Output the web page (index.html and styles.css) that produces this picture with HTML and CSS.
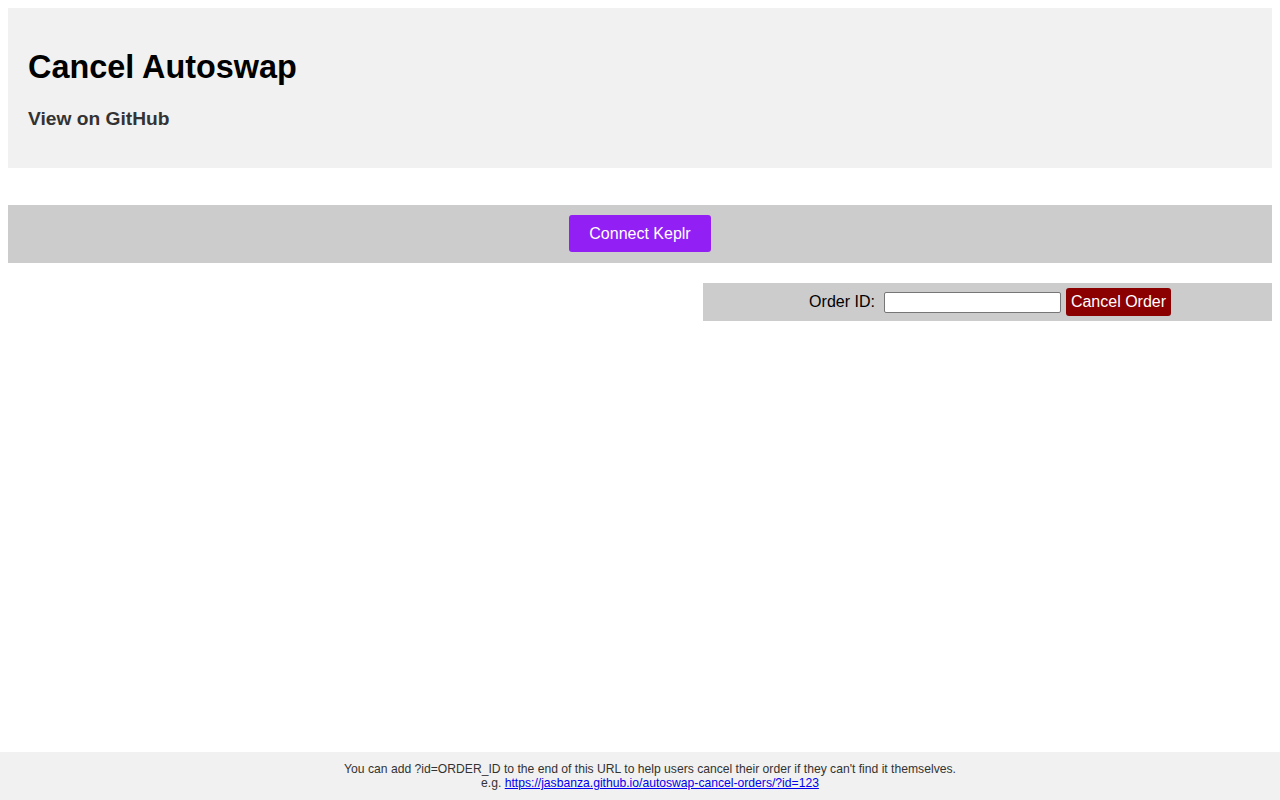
FILE: index.html
```html
<!DOCTYPE html>
<html>
<head>
<meta charset="utf-8">
<title>Cancel Autoswap</title>
<link rel="stylesheet" href="styles.css">
</head>
<body>
<header class="header">
  <h1 class="title">Cancel Autoswap</h1>
  <h3 class="subtitle"><a class="gh-link" href="#">View on GitHub</a></h3>
</header>
<div class="connect-bar">
  <button class="btn-connect">Connect Keplr</button>
</div>
<div class="main">
  <div class="orders"></div>
  <div class="cancel-panel">
    <label class="order-label" for="oid">Order ID:</label>
    <input class="order-input" id="oid" type="text">
    <button class="btn-cancel">Cancel Order</button>
  </div>
</div>
<footer class="footer">
  You can add ?id=ORDER_ID to the end of this URL to help users cancel their order if they can't find it themselves.<br>
  e.g. <a class="footer-link" href="#">https://jasbanza.github.io/autoswap-cancel-orders/?id=123</a>
</footer>
</body>
</html>
```
FILE: styles.css
```css
html, body {
  margin: 0;
  padding: 0;
}
body {
  margin: 8px;
  font-family: "Liberation Sans", Arial, sans-serif;
  color: #000;
}
.header {
  background: #f1f1f1;
  height: 160px;
  box-sizing: border-box;
  padding: 20px 20px;
  overflow: hidden;
}
.title {
  font-size: 32.4px;
  font-weight: bold;
  margin: 21px 0 22px;
}
.subtitle {
  font-size: 19.2px;
  font-weight: bold;
  margin: 0;
}
.gh-link {
  color: #333;
  text-decoration: none;
}
.connect-bar {
  margin-top: 37px;
  background: #ccc;
  padding: 10px;
  text-align: center;
  height: 58px;
  box-sizing: border-box;
}
.btn-connect {
  background: #9220f5;
  color: #fff;
  border: none;
  border-radius: 3px;
  font-family: "Liberation Sans", Arial, sans-serif;
  font-size: 16px;
  width: 142px;
  height: 37px;
  padding: 0;
  cursor: pointer;
}
.main {
  margin-top: 20px;
  display: grid;
  grid-template-columns: 55% 45%;
}
.cancel-panel {
  background: #ccc;
  height: 38px;
  box-sizing: border-box;
  display: flex;
  align-items: center;
  justify-content: center;
  padding-left: 5px;
}
.order-label {
  font-size: 16px;
  margin-right: 9px;
}
.order-input {
  width: 177px;
  height: 21px;
  box-sizing: border-box;
  border: 1px solid #767676;
  border-radius: 2px;
  padding: 1px 2px;
  margin: 0 5px 0 0;
  background: #fff;
}
.btn-cancel {
  background: #8b0000;
  color: #fff;
  border: none;
  border-radius: 3px;
  font-family: "Liberation Sans", Arial, sans-serif;
  font-size: 16px;
  height: 28px;
  padding: 0 5px;
  cursor: pointer;
}
.footer {
  position: fixed;
  left: 0;
  right: 0;
  bottom: 0;
  height: 48px;
  box-sizing: border-box;
  background: #f1f1f1;
  color: #333;
  font-size: 12.15px;
  line-height: 14px;
  text-align: center;
  padding: 10px 0 0 20px;
}
.footer-link {
  color: #00e;
}
```
